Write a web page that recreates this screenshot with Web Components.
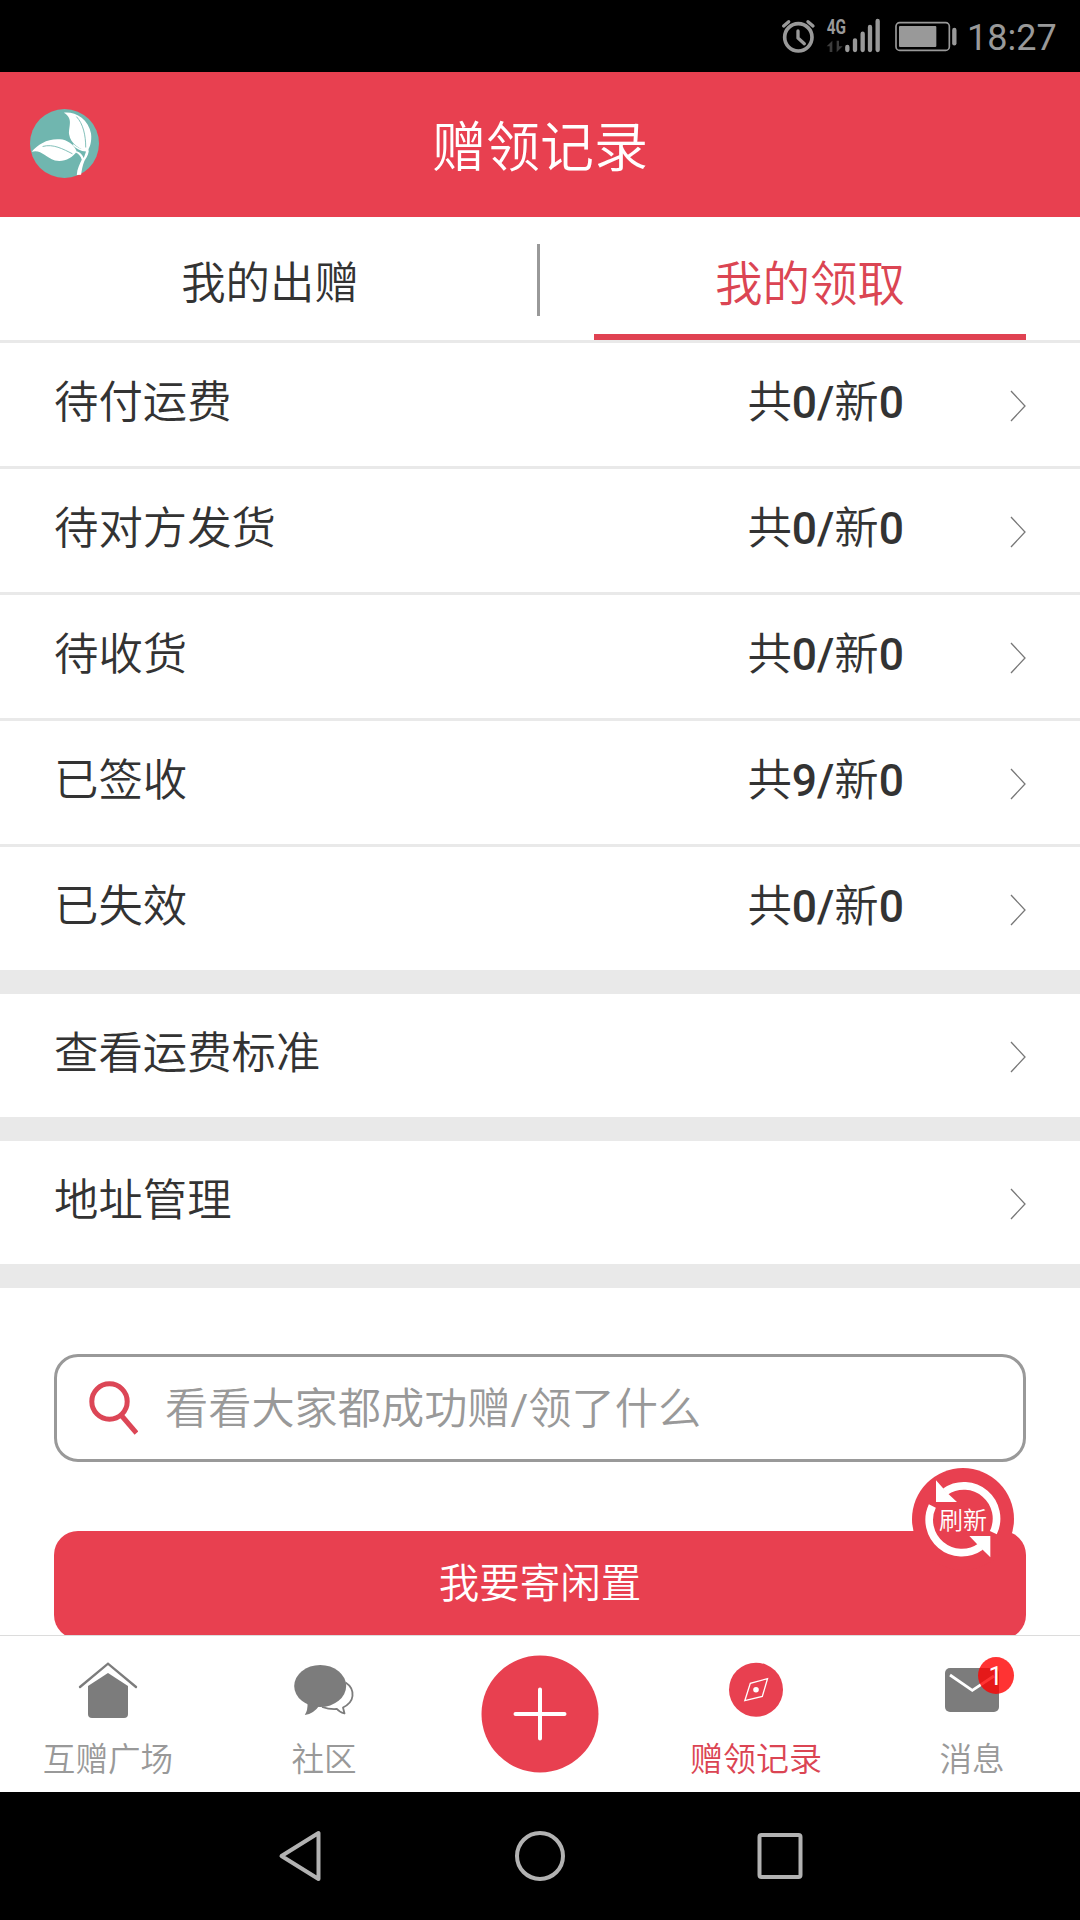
<!DOCTYPE html>
<html lang="zh-CN">
<head>
<meta charset="utf-8">
<title>赠领记录</title>
<style>
html,body{margin:0;padding:0;background:#000}
body{width:1080px;height:1920px;overflow:hidden;font-family:"Noto Sans CJK SC","Noto Sans",sans-serif;font-weight:350;color:#333}
</style>
</head>
<body>
<gift-app></gift-app>
<script>
const define = (name, css, html) => customElements.define(name, class extends HTMLElement {
  constructor() {
    super();
    const t = document.createElement('template');
    t.innerHTML = `<style>*{box-sizing:border-box}svg{display:block}${css}</style>${html}`;
    this.attachShadow({mode: 'open'}).append(t.content.cloneNode(true));
  }
});

define('status-bar', `
:host{display:flex;height:72px;background:#000;justify-content:flex-end}
svg{flex:none}
.time{width:120px;font:36px/72px Roboto,sans-serif;color:#999;padding-left:7px;padding-top:2px;white-space:nowrap}
`, `
<svg width="200" height="72" viewBox="0 0 600 216" fill="none" stroke="#999" stroke-linecap="round">
  <circle cx="115" cy="112" r="41" stroke-width="11"/>
  <path d="M114 93V114L133 131" stroke-width="10" stroke-linejoin="round"/>
  <path d="M71 78L86 65M144 65L159 78" stroke-width="10"/>
  <text x="200" y="102" font-family="Roboto" font-weight="700" font-size="62" textLength="58" lengthAdjust="spacingAndGlyphs" fill="#999" stroke="none">4G</text>
  <path d="M200 139L217 122V156H209V139ZM230 122H237V139H248L230 157Z" fill="#3c3c3c" stroke="none"/>
  <path d="M262 141V150M285 121V150M308 101V150M330 81V150M353 63V150" stroke-width="13"/>
  <rect x="408" y="68" width="160" height="83" rx="11" stroke-width="5"/>
  <rect x="417" y="78" width="112" height="63" rx="3" fill="#999" stroke="none"/>
  <path d="M583 90V130" stroke-width="13"/>
</svg>
<span class="time">18:27</span>
`);

define('app-header', `
:host{display:grid;grid-template-columns:1fr auto 1fr;align-items:center;height:145px;background:#e84050;color:#fff}
svg{margin:0 0 2px 30px}
h1{margin:0;font-size:54px;line-height:60px;font-weight:350;padding-bottom:2px}
`, `
<svg width="69" height="69" viewBox="90 86 208 208">
  <circle cx="194" cy="190" r="104" fill="#70b6af"/>
  <path fill="#fff" d="M192 97C225 93 266 115 274 160C277 185 270 203 263 213C240 208 212 190 208 163C206 138 222 114 192 97Z"/>
  <path fill="#fff" d="M95 215C115 190 148 172 188 178C210 183 226 200 231 214C217 234 192 247 165 241C135 232 124 207 95 215Z"/>
  <path fill="#fff" d="M222 192C233 203 247 210 266 207L267 214C265 227 258 235 254 243C248 256 246 272 244 284L231 285C232 266 240 252 246 239C243 228 238 222 228 217L231 213C241 216 248 223 252 234L259 214C243 214 229 206 218 194Z"/>
  <path fill="none" stroke="#70b6af" stroke-width="2.6" d="M230 109C250 130 258 165 258 202M128 199C160 190 190 207 218 221"/>
</svg>
<h1><slot></slot></h1>
`);

define('record-tabs', `
:host{display:flex;height:126px;background:#fff;border-bottom:3px solid #e9e9e9}
.tab{flex:1 1 0;display:flex;align-items:center;justify-content:center;font-size:44.4px;line-height:60px;padding:2px 0 0 3px}
i{width:3px;height:72px;margin-top:27px;background:#999}
.wrap{width:540px;display:flex;padding:0 54px}
.on{font-size:47.5px;color:#db4553;border-bottom:6px solid #e04252;padding:10px 0 0}
`, `
<div class="tab"><slot name="given"></slot></div><i></i>
<div class="wrap"><div class="tab on"><slot name="taken"></slot></div></div>
`);

define('list-row', `
:host{display:flex;align-items:center;height:123px;flex:none;background:#fff;padding:0 54px;font-size:44.4px}
.label{flex:1;line-height:60px;padding-bottom:11px}
.count{line-height:60px;padding-bottom:11px;margin-right:106px}
svg{flex:none;margin-top:3px}
`, `
<span class="label"><slot></slot></span><span class="count"><slot name="count"></slot></span>
<svg width="16" height="32" viewBox="0 0 16 32" fill="none" stroke="#777" stroke-width="1.3"><path d="M1 1L15 16L1 31"/></svg>
`);

define('row-group', `
:host{display:flex;flex-direction:column;flex:none;gap:3px;background:#e9e9e9;border-bottom:24px solid #e9e9e9}
`, `<slot></slot>`);

define('search-box', `
:host{display:flex;align-items:center;flex:none;height:108px;margin:66px 54px 0;border:3px solid #999;border-radius:24px;color:#999;font-size:43.2px}
svg{margin:-1px 27.5px 0 30.5px}
span{line-height:60px;padding-bottom:7px;white-space:nowrap}
`, `
<svg width="50" height="58" viewBox="0 0 50 58" fill="none" stroke="#dc4656"><circle cx="21.5" cy="22.5" r="17.7" stroke-width="5"/><path d="M33 36L48.5 54" stroke-width="5"/></svg>
<span><slot></slot></span>
`);

define('main-button', `
:host{display:flex;align-items:center;justify-content:center;flex:none;height:108px;margin:69px 54px 0;background:#e84050;border-radius:24px;color:#fff;font-size:40.5px;line-height:60px;padding-bottom:8px}
`, `<slot></slot>`);

define('refresh-button', `
:host{position:absolute;left:912px;top:1468px;width:102px;height:102px;display:grid;place-items:center}
:host>*{grid-area:1/1}
span{font-size:24px;line-height:30px;color:#fff}
`, `
<svg width="102" height="102" viewBox="156 53 306 306">
  <circle cx="309" cy="206" r="153" fill="#e84050"/>
  <g fill="none" stroke="#fff" stroke-width="23"><path d="M256 124A98 98 0 0 1 400 247"/><path d="M217 167A98 98 0 0 0 362 289"/></g>
  <path fill="#fff" d="M228 90V155H291L262 128ZM328 257H391V321L356 286Z"/>
</svg>
<span><slot></slot></span>
`);

define('tab-item', `
:host{flex:1;display:flex;flex-direction:column;align-items:center;color:#999;font-size:32.6px;line-height:40px}
:host([active]){color:#db4553;font-size:33px}
.icon{height:83px;margin-top:18px;position:relative;flex:none}
`, `<div class="icon"><slot name="icon"></slot></div><span><slot></slot></span>`);

define('count-badge', `
:host{position:absolute;left:55.5px;top:2.5px;width:36px;height:37px;border-radius:50%;background:rgba(255,0,0,.8);color:#fff;font:25px/39px Roboto,sans-serif;text-align:center}
`, `<slot></slot>`);

define('bottom-tabs', `
:host{display:flex;height:157px;background:#fff;border-top:1px solid #dcdcdc}
.add{flex:1;display:flex;justify-content:center;padding-top:19px}
`, `
<tab-item><svg slot="icon" width="100" height="82" viewBox="58 1654 100 82"><path d="M80 1687L108 1663.7L136 1687" fill="none" stroke="#7c7c7c" stroke-width="2.4" stroke-linecap="round"/><path d="M88 1686L108 1673L128 1686V1714Q128 1718 124 1718H92Q88 1718 88 1714Z" fill="#7c7c7c"/></svg>互赠广场</tab-item>
<tab-item><svg slot="icon" width="100" height="82" viewBox="274 1654 100 82"><path d="M345.5 1682.5C351 1686 353 1691 352.5 1696C352 1701 348 1705 343 1707.5L344.5 1713.5C341 1712.5 338.5 1711 337 1709C332 1709.5 328 1709 322 1707" fill="none" stroke="#7c7c7c" stroke-width="1.8" stroke-linejoin="round"/><ellipse cx="320.2" cy="1686" rx="26" ry="21" fill="#7c7c7c"/><path d="M307.5 1703Q308 1710 304.8 1715Q314 1713.5 319 1706Z" fill="#7c7c7c"/></svg>社区</tab-item>
<div class="add"><svg width="118" height="118" viewBox="0 0 118 118"><circle cx="59" cy="59" r="58.5" fill="#e84050"/><path d="M34.5 59H83.5M59 34.5V83.5" stroke="#fff" stroke-width="4" stroke-linecap="round"/></svg></div>
<tab-item active><svg slot="icon" width="100" height="82" viewBox="706 1654 100 82"><circle cx="756" cy="1689.7" r="27" fill="#e84050"/><path d="M767.5 1678.7L762.3 1696.5L744.8 1700.7L750.3 1683.3Z" fill="none" stroke="#fff" stroke-width="1.3"/><circle cx="756" cy="1689.7" r="2.8" fill="#fff"/></svg>赠领记录</tab-item>
<tab-item><svg slot="icon" width="100" height="82" viewBox="922 1654 100 82"><rect x="945" y="1668" width="54" height="44" rx="5" fill="#7c7c7c"/><path d="M950 1675L972.3 1690.3L994 1676" fill="none" stroke="#fff" stroke-width="2.8"/></svg><count-badge slot="icon">1</count-badge>消息</tab-item>
`);

define('system-nav', `
:host{display:flex;height:128px;background:#000;align-items:center;justify-content:center;gap:180px}
`, `
<svg width="60" height="60" viewBox="0 0 60 60" fill="none" stroke="#b2b2b2" stroke-width="4" stroke-linejoin="round"><path d="M10 30L47 7V53Z" transform="translate(1.5)"/></svg>
<svg width="60" height="60" viewBox="0 0 60 60" fill="none" stroke="#b2b2b2" stroke-width="4"><circle cx="30" cy="30" r="23"/></svg>
<svg width="60" height="60" viewBox="0 0 60 60" fill="none" stroke="#b2b2b2" stroke-width="4"><rect x="9.5" y="9" width="41" height="42" rx="2"/></svg>
`);

define('gift-app', `
:host{display:flex;flex-direction:column;position:relative;width:1080px;height:1920px;overflow:hidden;background:#fff}
status-bar,app-header,record-tabs,bottom-tabs,system-nav{flex:none}
main{flex:1;min-height:0;overflow:hidden;display:flex;flex-direction:column}
b{font-family:Roboto,sans-serif;font-weight:500;line-height:1}
.slash{font-family:Roboto,sans-serif;font-weight:400;line-height:1}
`, `
<status-bar></status-bar>
<app-header>赠领记录</app-header>
<record-tabs><span slot="given">我的出赠</span><span slot="taken">我的领取</span></record-tabs>
<main>
<row-group>
<list-row>待付运费<span slot="count">共<b>0/</b>新<b>0</b></span></list-row>
<list-row>待对方发货<span slot="count">共<b>0/</b>新<b>0</b></span></list-row>
<list-row>待收货<span slot="count">共<b>0/</b>新<b>0</b></span></list-row>
<list-row>已签收<span slot="count">共<b>9/</b>新<b>0</b></span></list-row>
<list-row>已失效<span slot="count">共<b>0/</b>新<b>0</b></span></list-row>
</row-group>
<row-group><list-row>查看运费标准</list-row></row-group>
<row-group><list-row>地址管理</list-row></row-group>
<search-box>看看大家都成功赠<span class="slash">/</span>领了什么</search-box>
<main-button>我要寄闲置</main-button>
</main>
<bottom-tabs></bottom-tabs>
<system-nav></system-nav>
<refresh-button>刷新</refresh-button>
`);
</script>
</body>
</html>
